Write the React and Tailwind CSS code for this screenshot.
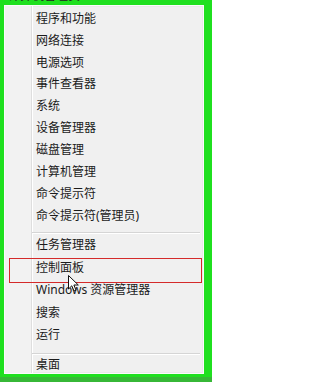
const groups = [
  {
    rowClass: 'h-[21.85px]',
    items: [
      '程序和功能',
      '网络连接',
      '电源选项',
      '事件查看器',
      '系统',
      '设备管理器',
      '磁盘管理',
      '计算机管理',
      '命令提示符',
      '命令提示符(管理员)',
    ],
  },
  {
    rowClass: 'h-[22.5px]',
    items: ['任务管理器', '控制面板', 'Windows 资源管理器', '搜索', '运行'],
  },
  {
    rowClass: 'h-[20px]',
    items: ['桌面'],
  },
];

function Separator({ className }) {
  return (
    <div className={className}>
      <div className="mr-[3px] h-px bg-[#d5d5d5]" />
      <div className="mr-[3px] h-px bg-white" />
    </div>
  );
}

function Cursor() {
  return (
    <svg
      className="absolute left-[68px] top-[275px]"
      width="12"
      height="18"
      viewBox="0 0 12 18"
    >
      <path
        d="M0.5 0.5 L0.5 14 L3.8 10.8 L6 16 L8 15.2 L5.9 10 L10.3 10 Z"
        fill="#ffffff"
        stroke="#111111"
        strokeWidth="1"
        strokeLinejoin="miter"
      />
    </svg>
  );
}

export default function App() {
  return (
    <div
      className="relative h-[382px] w-[212px] overflow-hidden border-b-[5px] border-b-[#37b837] bg-[#1fe01f] pb-[3px] pl-[4px] pr-[8px] pt-[5px] text-[12px] leading-none text-[#1b1b1b]"
      style={{ fontFamily: '"Noto Sans", "Noto Sans CJK SC", sans-serif' }}
    >
      {/* cut-off text peeking above the menu */}
      <span className="absolute left-[8px] top-[-10px] text-[#222]">计算机管理员</span>

      <div className="flex h-full border border-[#fbfbfb] bg-[#f0f0f0] shadow-[inset_0_0_0_1px_#e9e9e9]">
        <div className="w-[26px] shrink-0 bg-[#f2f2f2]" />
        <div className="flex flex-1 flex-col overflow-hidden border-l border-[#dedede] pt-[2px] shadow-[inset_1px_0_0_#ffffff]">
          {groups.map((group, gi) => (
            <div key={gi}>
              {gi === 1 && <Separator className="pt-[5.5px]" />}
              {gi === 2 && <Separator className="pt-[6.7px]" />}
              {group.items.map((label) => (
                <div key={label} className={`flex items-center pl-[4px] ${group.rowClass}`}>
                  {label}
                </div>
              ))}
            </div>
          ))}
        </div>
      </div>

      {/* red highlight around the selected item */}
      <div className="absolute left-[9px] top-[258px] h-[25px] w-[193px] border border-[#d42a2a]" />

      <Cursor />
    </div>
  );
}
